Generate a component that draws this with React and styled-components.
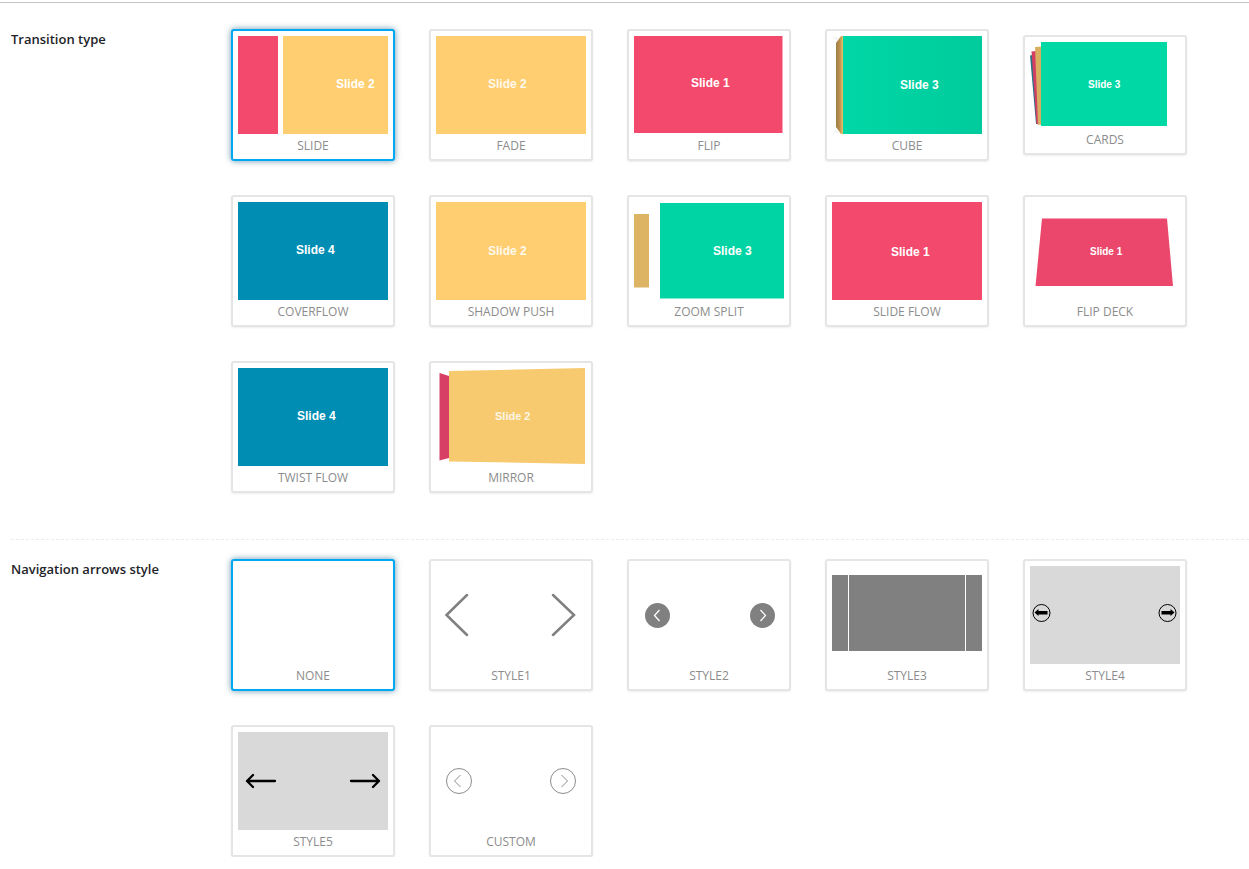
import React, { useState } from 'react';
import styled, { createGlobalStyle } from 'styled-components';

const GlobalStyle = createGlobalStyle`
  * {
    box-sizing: border-box;
  }
  body {
    margin: 0;
    background: #fff;
    font-family: "Open Sans", "Noto Sans", sans-serif;
  }
`;

const Page = styled.main`
  margin-top: 2px;
  padding: 7px 0 0 11px;
  border-top: 1px solid #c3c4c7;
`;

const Section = styled.section`
  display: grid;
  grid-template-columns: 220px 1fr;
  padding-top: 19px;

  & + & {
    margin-top: 46px;
    border-top: 1px dashed #ececec;
  }
`;

const SectionTitle = styled.h2`
  margin: 0;
  font-size: 13px;
  font-weight: 600;
  line-height: 20px;
  color: #1d2327;
`;

const Options = styled.div`
  display: flex;
  flex-wrap: wrap;
  align-items: center;
  gap: 34px;
`;

const Option = styled.label`
  position: relative;
  padding: 5px 5px 3px;
  border: 2px solid ${({ $selected }) => ($selected ? '#00a8f3' : '#e5e5e5')};
  border-radius: 3px;
  background: #fff;
  box-shadow: ${({ $selected }) => ($selected
    ? '0 0 6px rgba(0, 80, 110, 0.6)'
    : '0 1px 2px rgba(0, 0, 0, 0.07)')};
  cursor: pointer;
`;

// the native radio stays on top of the card, only invisible
const Radio = styled.input`
  position: absolute;
  inset: 0;
  width: 100%;
  height: 100%;
  margin: 0;
  opacity: 0;
  cursor: pointer;
`;

const Thumb = styled.svg`
  display: block;
  width: 150px;
  height: ${({ $height }) => $height}px;
`;

const SlideText = styled.text`
  font-family: "Liberation Sans", Arial, sans-serif;
  font-size: ${({ $size }) => $size || 12}px;
  font-weight: 700;
  fill: ${({ $color }) => $color || '#fff'};
`;

const OptionName = styled.span`
  display: block;
  margin-top: 2px;
  font-size: 12px;
  line-height: 20px;
  text-align: center;
  text-transform: uppercase;
  color: #8c8c8c;
`;

const PINK = '#f3496d';
const YELLOW = '#ffce71';
const BLUE = '#008db3';
const GREEN = '#00d8a6';
const GREY = '#808080';

const transitions = [
  {
    name: 'Slide',
    art: (
      <>
        <rect width="40" height="98" fill={PINK} />
        <rect x="45" width="105" height="98" fill={YELLOW} />
        <SlideText x="98" y="52">Slide 2</SlideText>
      </>
    ),
  },
  {
    name: 'Fade',
    art: (
      <>
        <rect width="150" height="98" fill={YELLOW} />
        <SlideText x="52" y="52" $color="#fff9ec">Slide 2</SlideText>
      </>
    ),
  },
  {
    name: 'Flip',
    art: (
      <>
        <rect width="148.5" height="97" fill={PINK} />
        <SlideText x="57" y="51">Slide 1</SlideText>
      </>
    ),
  },
  {
    name: 'Cube',
    art: (
      <>
        <defs>
          <linearGradient id="cubeFront">
            <stop offset="0" stopColor="#00d7a6" />
            <stop offset="1" stopColor="#00cb9d" />
          </linearGradient>
          <linearGradient id="cubeSide">
            <stop offset="0" stopColor="#9c7d45" />
            <stop offset="0.6" stopColor="#c09550" />
            <stop offset="1" stopColor="#f0c36c" />
          </linearGradient>
        </defs>
        <path d="M0 1H7L4 5M0 97H7L4 93" fill="#f5f5f5" />
        <path d="M4 7L9 0H11V98H9L4 91Z" fill="url(#cubeSide)" />
        <rect x="11" width="139" height="98" fill="url(#cubeFront)" />
        <SlideText x="68" y="53">Slide 3</SlideText>
      </>
    ),
  },
  {
    name: 'Cards',
    height: 86,
    art: (
      <>
        <path d="M0 13.5L3 13L8 82H6Z" fill="#2b7184" />
        <path d="M1.5 9.5L6 9L9 82.5L6.5 82Z" fill="#d23f63" />
        <path d="M5 5L12 4.5V83L8 82.5Z" fill="#d9ae60" />
        <rect x="11" width="126" height="84" fill={GREEN} />
        <SlideText x="58" y="46" $size={10}>Slide 3</SlideText>
      </>
    ),
  },
  {
    name: 'Coverflow',
    art: (
      <>
        <rect width="150" height="98" fill={BLUE} />
        <SlideText x="58" y="52">Slide 4</SlideText>
      </>
    ),
  },
  {
    name: 'Shadow push',
    art: (
      <>
        <rect width="150" height="98" fill={YELLOW} />
        <SlideText x="52" y="53" $color="#fff9ec">Slide 2</SlideText>
      </>
    ),
  },
  {
    name: 'Zoom split',
    art: (
      <>
        <rect y="12" width="15" height="73.5" fill="#dcb463" />
        <rect x="26" y="1" width="124" height="95.5" fill="#00d4a4" />
        <SlideText x="79" y="53">Slide 3</SlideText>
      </>
    ),
  },
  {
    name: 'Slide flow',
    art: (
      <>
        <rect width="150" height="98" fill={PINK} />
        <SlideText x="59" y="54">Slide 1</SlideText>
      </>
    ),
  },
  {
    name: 'Flip deck',
    art: (
      <>
        <path d="M12 16.500H137L143 84H5.500Z" fill="#eb476c" />
        <SlideText x="60" y="53" $size={10}>Slide 1</SlideText>
      </>
    ),
  },
  {
    name: 'Twist flow',
    art: (
      <>
        <rect width="150" height="98" fill={BLUE} />
        <SlideText x="59" y="52">Slide 4</SlideText>
      </>
    ),
  },
  {
    name: 'Mirror',
    art: (
      <>
        <path d="M3.5 5L13 8V90L3.5 92.5Z" fill="#d83f64" />
        <path d="M13 3L149 0V96L13 93.5Z" fill="#f7ca6f" />
        <SlideText x="59" y="52" $size={11} $color="#fdf6e6">Slide 2</SlideText>
      </>
    ),
  },
];

const arrows = [
  { name: 'None', art: null },
  {
    name: 'Style1',
    art: (
      <path
        d="M31 29L10.5 49L31 69M117 29L138 49L117 69"
        fill="none"
        stroke={GREY}
        strokeWidth="2.5"
        strokeLinecap="round"
      />
    ),
  },
  {
    name: 'Style2',
    art: (
      <>
        <circle cx="23.5" cy="49.5" r="12.5" fill={GREY} />
        <circle cx="128.5" cy="49.5" r="12.5" fill={GREY} />
        <path
          d="M25.5 44L20.5 49.5L25.5 55M126.500 44L131.500 49.500L126.500 55"
          fill="none"
          stroke="#fff"
          strokeWidth="1.3"
        />
      </>
    ),
  },
  {
    name: 'Style3',
    art: (
      <>
        <rect y="9" width="16" height="76" fill={GREY} />
        <rect x="17" y="9" width="116" height="76" fill={GREY} />
        <rect x="134" y="9" width="16" height="76" fill={GREY} />
      </>
    ),
  },
  {
    name: 'Style4',
    art: (
      <>
        <rect width="150" height="98" fill="#d9d9d9" />
        <circle cx="11.5" cy="47" r="8.5" fill="none" stroke="#000" />
        <circle cx="137.5" cy="47" r="8.5" fill="none" stroke="#000" />
        <path d="M4.5 46.5L8.5 43V45H17.5V48.5H8.5V50ZM144.5 46.5L140.5 43V45H131.5V48.5H140.5V50Z" />
      </>
    ),
  },
  {
    name: 'Style5',
    art: (
      <>
        <rect width="150" height="98" fill="#d9d9d9" />
        <path
          d="M37 49H9M15 43L9 49L15 55M113 49H141M135 43L141 49L135 55"
          fill="none"
          stroke="#000"
          strokeWidth="2.3"
          strokeLinecap="round"
          strokeLinejoin="round"
        />
      </>
    ),
  },
  {
    name: 'Custom',
    art: (
      <g fill="none" stroke="#8c8c8c">
        <circle cx="23" cy="49" r="12.5" />
        <circle cx="127" cy="49" r="12.5" />
        <path d="M24.5 43L18.5 49L24.5 55M125.5 43L131.5 49L125.5 55" />
      </g>
    ),
  },
];

const OptionGroup = ({ id, title, options, value, onChange }) => (
  <Section role="radiogroup" aria-labelledby={`${id}-title`}>
    <SectionTitle id={`${id}-title`}>{title}</SectionTitle>
    <Options>
      {options.map(({ name, height = 98, art }) => (
        <Option key={name} $selected={value === name}>
          <Radio
            type="radio"
            name={id}
            value={name}
            checked={value === name}
            onChange={() => onChange(name)}
          />
          <Thumb $height={height} viewBox={`0 0 150 ${height}`} aria-hidden="true">
            {art}
          </Thumb>
          <OptionName>{name}</OptionName>
        </Option>
      ))}
    </Options>
  </Section>
);

const App = () => {
  const [transition, setTransition] = useState('Slide');
  const [arrow, setArrow] = useState('None');

  return (
    <>
      <GlobalStyle />
      <Page>
        <OptionGroup
          id="transition"
          title="Transition type"
          options={transitions}
          value={transition}
          onChange={setTransition}
        />
        <OptionGroup
          id="arrows"
          title="Navigation arrows style"
          options={arrows}
          value={arrow}
          onChange={setArrow}
        />
      </Page>
    </>
  );
};

export default App;
